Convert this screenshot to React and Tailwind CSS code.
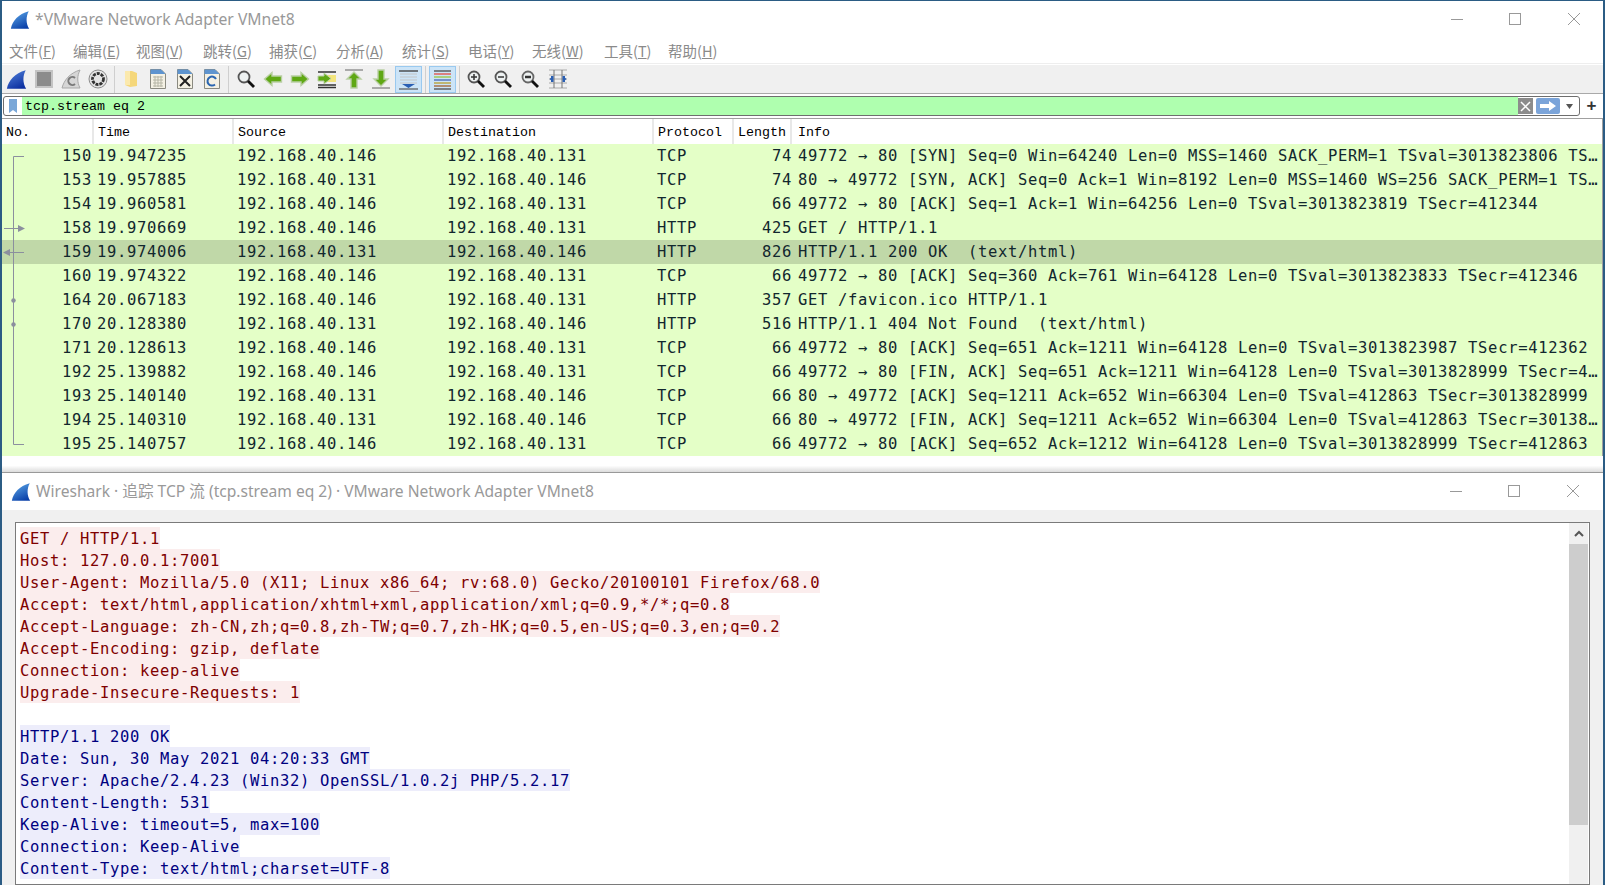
const rows = [
  ["150", "19.947235", "192.168.40.146", "192.168.40.131", "TCP", "74", "49772 → 80 [SYN] Seq=0 Win=64240 Len=0 MSS=1460 SACK_PERM=1 TSval=3013823806 TS…"],
  ["153", "19.957885", "192.168.40.131", "192.168.40.146", "TCP", "74", "80 → 49772 [SYN, ACK] Seq=0 Ack=1 Win=8192 Len=0 MSS=1460 WS=256 SACK_PERM=1 TS…"],
  ["154", "19.960581", "192.168.40.146", "192.168.40.131", "TCP", "66", "49772 → 80 [ACK] Seq=1 Ack=1 Win=64256 Len=0 TSval=3013823819 TSecr=412344"],
  ["158", "19.970669", "192.168.40.146", "192.168.40.131", "HTTP", "425", "GET / HTTP/1.1"],
  ["159", "19.974006", "192.168.40.131", "192.168.40.146", "HTTP", "826", "HTTP/1.1 200 OK  (text/html)"],
  ["160", "19.974322", "192.168.40.146", "192.168.40.131", "TCP", "66", "49772 → 80 [ACK] Seq=360 Ack=761 Win=64128 Len=0 TSval=3013823833 TSecr=412346"],
  ["164", "20.067183", "192.168.40.146", "192.168.40.131", "HTTP", "357", "GET /favicon.ico HTTP/1.1"],
  ["170", "20.128380", "192.168.40.131", "192.168.40.146", "HTTP", "516", "HTTP/1.1 404 Not Found  (text/html)"],
  ["171", "20.128613", "192.168.40.146", "192.168.40.131", "TCP", "66", "49772 → 80 [ACK] Seq=651 Ack=1211 Win=64128 Len=0 TSval=3013823987 TSecr=412362"],
  ["192", "25.139882", "192.168.40.146", "192.168.40.131", "TCP", "66", "49772 → 80 [FIN, ACK] Seq=651 Ack=1211 Win=64128 Len=0 TSval=3013828999 TSecr=4…"],
  ["193", "25.140140", "192.168.40.131", "192.168.40.146", "TCP", "66", "80 → 49772 [ACK] Seq=1211 Ack=652 Win=66304 Len=0 TSval=412863 TSecr=3013828999"],
  ["194", "25.140310", "192.168.40.131", "192.168.40.146", "TCP", "66", "80 → 49772 [FIN, ACK] Seq=1211 Ack=652 Win=66304 Len=0 TSval=412863 TSecr=30138…"],
  ["195", "25.140757", "192.168.40.146", "192.168.40.131", "TCP", "66", "49772 → 80 [ACK] Seq=652 Ack=1212 Win=64128 Len=0 TSval=3013828999 TSecr=412863"],
];

const request = [
  "GET / HTTP/1.1",
  "Host: 127.0.0.1:7001",
  "User-Agent: Mozilla/5.0 (X11; Linux x86_64; rv:68.0) Gecko/20100101 Firefox/68.0",
  "Accept: text/html,application/xhtml+xml,application/xml;q=0.9,*/*;q=0.8",
  "Accept-Language: zh-CN,zh;q=0.8,zh-TW;q=0.7,zh-HK;q=0.5,en-US;q=0.3,en;q=0.2",
  "Accept-Encoding: gzip, deflate",
  "Connection: keep-alive",
  "Upgrade-Insecure-Requests: 1",
];

const response = [
  "HTTP/1.1 200 OK",
  "Date: Sun, 30 May 2021 04:20:33 GMT",
  "Server: Apache/2.4.23 (Win32) OpenSSL/1.0.2j PHP/5.2.17",
  "Content-Length: 531",
  "Keep-Alive: timeout=5, max=100",
  "Connection: Keep-Alive",
  "Content-Type: text/html;charset=UTF-8",
];

const menus = [
  ["文件", "F", "w-[64px]"], ["编辑", "E", "w-[63px]"], ["视图", "V", "w-[67px]"], ["跳转", "G", "w-[66px]"],
  ["捕获", "C", "w-[67px]"], ["分析", "A", "w-[66px]"], ["统计", "S", "w-[66px]"], ["电话", "Y", "w-[64px]"],
  ["无线", "W", "w-[72px]"], ["工具", "T", "w-[64px]"], ["帮助", "H", "w-[60px]"],
];

const Fin = ({ className, id = "finGrad", from = "#5aa5e6", to = "#0a3fa8" }) => (
  <svg viewBox="0 0 24 24" className={className}>
    <defs>
      <linearGradient id={id} x1="0.2" y1="0" x2="0.7" y2="1">
        <stop offset="0" stopColor={from} />
        <stop offset="1" stopColor={to} />
      </linearGradient>
    </defs>
    <path d="M1 22.5C3 13 10 5 22.5 1.5C19 8 19 16 23 22.5Z" fill={`url(#${id})`} />
  </svg>
);

const WinControls = ({ dx }) => (
  <div className={`flex items-center ${dx}`}>
    <svg width="130" height="14" viewBox="0 0 130 14" stroke="#999" fill="none" shapeRendering="crispEdges">
      <path d="M1 6.5H13" />
      <rect x="59.5" y="0.5" width="11" height="11" />
      <path d="M118 0L130 12M130 0L118 12" shapeRendering="auto" />
    </svg>
  </div>
);

// toolbar drawings
const Doc = ({ children }) => (
  <svg width="22" height="22" viewBox="0 0 22 22">
    <path d="M3.5 1.5H14L18.5 6V20.5H3.5Z" fill="#f4f1e4" stroke="#8a8a80" />
    <path d="M3.5 1.5H14L18.5 6H3.5Z" fill="#5e94cf" />
    {children}
  </svg>
);
const Grid = () => (
  <path d="M6 9H16M6 12H16M6 15H16M6 18H16M8 8V19M11 8V19M14 8V19" stroke="#b5b5a5" strokeWidth="1" fill="none" />
);
const Lens = ({ sign, grey }) => (
  <svg width="20" height="20" viewBox="0 0 20 20" fill="none">
    <circle cx="8" cy="8" r="5.5" fill="#eef2f2" stroke={grey ? "#666" : "#555"} strokeWidth="1.8" />
    <path d="M12 12L18 18" stroke="#111" strokeWidth="2.8" />
    {sign === "plus" && <path d="M5 8H11M8 5V11" stroke="#333" strokeWidth="1.5" />}
    {(sign === "minus" || sign === "normal") && <path d="M5 8H11" stroke="#333" strokeWidth={sign === "normal" ? 2.5 : 1.5} />}
  </svg>
);
const GreenArrow = ({ left }) => (
  <svg width="20" height="20" viewBox="0 0 20 20" className={left ? "" : "-scale-x-100"}>
    <path d="M1.5 10L9 3.5V7H18.5V13H9V16.5Z" fill="#5fa814" stroke="#b9cfa4" strokeWidth="1.4" />
  </svg>
);
const Stack = ({ up }) => (
  <svg width="20" height="22" viewBox="0 0 20 22">
    <path d={up ? "M1 2H19" : "M1 20H19"} stroke="#aaa" strokeWidth="2" />
    <path d={up ? "M10 4L17 11H13V20H7V11H3Z" : "M10 18L17 11H13V2H7V11H3Z"} fill="#5fa814" stroke="#b9cfa4" strokeWidth="1.4" />
  </svg>
);

const Btn = ({ children }) => (
  <div className="w-[27px] h-[27px] flex items-center justify-center shrink-0">{children}</div>
);
const Sep = ({ w = "w-[6px]" }) => (
  <div className={`${w} h-[27px] flex justify-center shrink-0`}><div className="w-px h-full bg-[#cfcfcf]" /></div>
);
const Toggled = ({ children }) => (
  <div className="w-[27px] h-[27px] flex items-center justify-center shrink-0 bg-[#cce4f7] border border-[#99c9ef]">{children}</div>
);

const Toolbar = () => (
  <div className="h-[29px] bg-[#f0f0f0] border-b border-[#a9a9a9] flex items-center pl-px mt-px">
    <Btn><Fin className="w-[21px] h-[21px]" id="finTool" from="#4f7fd8" to="#0c2fa0" /></Btn>
    <Btn><svg width="18" height="18"><rect x="1" y="1" width="16" height="16" fill="#8c8c8c" stroke="#c4c4c4" strokeWidth="2" /></svg></Btn>
    <Btn>
      <svg width="20" height="20" viewBox="0 0 20 20">
        <path d="M1 19C3 11 9 4 19 1C16 7 16 13 19 19Z" fill="#d6d6d6" stroke="#a8a8a8" />
        <path d="M14 9A4 4 0 1 0 14 15" fill="none" stroke="#7a7a7a" strokeWidth="2" />
      </svg>
    </Btn>
    <Btn>
      <svg width="20" height="20" viewBox="0 0 20 20" fill="none">
        <circle cx="10" cy="10" r="9" fill="#e4e4e4" stroke="#8c8c8c" />
        <circle cx="10" cy="10" r="5.5" stroke="#333" strokeWidth="2.8" strokeDasharray="3 1" />
        <circle cx="10" cy="10" r="2.5" fill="#e4e4e4" />
      </svg>
    </Btn>
    <Sep />
    <Btn>
      <svg width="14" height="18" viewBox="0 0 14 18">
        <path d="M1 1H8L13 3V16L6 17L1 15Z" fill="#f5d77a" />
        <path d="M1 1H6V15H1Z" fill="#fbe9ad" />
      </svg>
    </Btn>
    <Btn><Doc><Grid /></Doc></Btn>
    <Btn><Doc><path d="M6 8L16 18M16 8L6 18" stroke="#222" strokeWidth="2" /></Doc></Btn>
    <Btn><Doc><path d="M15 11A4.5 4.5 0 1 0 14 16.5" fill="none" stroke="#2b66b1" strokeWidth="2" /></Doc></Btn>
    <Sep w="w-[7px]" />
    <Btn><Lens /></Btn>
    <Btn><GreenArrow left /></Btn>
    <Btn><GreenArrow /></Btn>
    <Btn>
      <svg width="20" height="20" viewBox="0 0 20 20">
        <path d="M1 3H19M1 16H19M1 18.5H19" stroke="#333" strokeWidth="1.3" />
        <rect x="8" y="6" width="11" height="7" fill="#f3e57d" />
        <path d="M14 9.5L7 4V7H1V12H7V15Z" fill="#5fa814" stroke="#b9cfa4" />
      </svg>
    </Btn>
    <Btn><Stack up /></Btn>
    <Btn><Stack /></Btn>
    <div className="w-px shrink-0" />
    <Toggled>
      <svg width="21" height="21" viewBox="0 0 21 21">
        <path d="M1 2H20" stroke="#444" strokeWidth="1.4" />
        <path d="M2 5H19M2 8H19M2 11H19M2 14H19" stroke="#c4c4c4" />
        <path d="M1 20H20" stroke="#555" strokeWidth="1.2" />
        <path d="M4 15H17L10.5 19Z" fill="#2a5fb3" />
      </svg>
    </Toggled>
    <Sep w="w-[7px]" />
    <Toggled>
      <svg width="21" height="21" viewBox="0 0 21 21" strokeWidth="1.4">
        <path d="M2 2H19" stroke="#555" />
        <path d="M2 5H19" stroke="#e2574c" />
        <path d="M2 8H19" stroke="#9ec74a" />
        <path d="M2 11H19" stroke="#4f6fb8" />
        <path d="M2 14H19" stroke="#b9a23a" />
        <path d="M2 17H19" stroke="#a5683a" />
        <path d="M2 20H19" stroke="#555" />
      </svg>
    </Toggled>
    <Sep />
    <Btn><Lens sign="plus" /></Btn>
    <Btn><Lens sign="minus" /></Btn>
    <Btn><Lens sign="normal" grey /></Btn>
    <div className="w-px shrink-0" />
    <Btn>
      <svg width="20" height="20" viewBox="0 0 20 20" fill="none">
        <path d="M1 1H19M1 19H19M1 6H19M1 10H19M1 14H19" stroke="#aaa" />
        <path d="M6 1V19M14 1V19" stroke="#777" />
        <path d="M5 7V13L1.5 10ZM15 7V13L18.5 10Z" fill="#2a5fb3" />
        <rect x="3" y="7" width="2.5" height="6" fill="#2a5fb3" />
        <rect x="14.5" y="7" width="2.5" height="6" fill="#2a5fb3" />
      </svg>
    </Btn>
  </div>
);

const FilterBar = () => (
  <div className="flex items-center h-[20px] mt-[2px] pl-px">
    <div className="flex-1 h-[20px] border border-[#6e6e6e] rounded-[3px] flex items-stretch overflow-hidden bg-white">
      <div className="w-[18px] flex items-center justify-center shrink-0">
        <svg width="8" height="14" viewBox="0 0 8 14"><path d="M0 0H8V14L4 11L0 14Z" fill="#7aa7d8" /></svg>
      </div>
      <div className="flex-1 bg-[#afffaf] pl-[3px] leading-[20px] text-[13.33px] text-black font-['Liberation_Mono',monospace] whitespace-pre">
        tcp.stream eq 2
      </div>
      <div className="w-[15px] bg-[#8c8c8c] my-px shrink-0 flex items-center justify-center">
        <svg width="11" height="11" viewBox="0 0 11 11"><path d="M1 1L10 10M10 1L1 10" stroke="#fff" strokeWidth="1.5" /></svg>
      </div>
      <div className="w-[24px] ml-[3px] bg-[#7ba4d9] my-px rounded-[2px] shrink-0 flex items-center justify-center">
        <svg width="16" height="10" viewBox="0 0 16 10"><path d="M0 3H9V0L16 5L9 10V7H0Z" fill="#fff" /></svg>
      </div>
      <div className="w-[19px] shrink-0 flex items-center justify-center">
        <svg width="7" height="5" viewBox="0 0 7 5"><path d="M0 0H7L3.5 5Z" fill="#555" /></svg>
      </div>
    </div>
    <div className="w-[23px] text-center text-[17px] leading-[18px] font-bold text-[#333] font-['Liberation_Sans',sans-serif]">+</div>
  </div>
);

const Head = ({ className, children }) => (
  <div className={`${className} pl-[4px] border-r-2 border-[#e8e8e8] h-full shrink-0`}>{children}</div>
);

const PacketList = () => (
  <div className="relative mt-[2px] border-t border-r border-[#a0a0a0] font-['DejaVu_Sans_Mono',monospace]">
    <div className="h-[25px] flex bg-white text-[13.33px] leading-[28px] text-black font-['Liberation_Mono',monospace]">
      <Head className="w-[92px]">No.</Head>
      <Head className="w-[140px]">Time</Head>
      <Head className="w-[210px]">Source</Head>
      <Head className="w-[210px]">Destination</Head>
      <Head className="w-[80px]">Protocol</Head>
      <Head className="w-[58px]">Length</Head>
      <div className="pl-[6px]">Info</div>
    </div>
    {rows.map((r) => (
      <div key={r[0]} className={`h-[24px] flex text-[15.5px] tracking-[0.67px] leading-[25px] text-[#12272e] whitespace-pre ${r[0] === "159" ? "bg-[#c0d8a8]" : "bg-[#e4ffc7]"}`}>
        <div className="w-[92px] shrink-0 text-right pr-[2px]">{r[0]}</div>
        <div className="w-[140px] shrink-0 pl-[3px]">{r[1]}</div>
        <div className="w-[210px] shrink-0 pl-[3px]">{r[2]}</div>
        <div className="w-[210px] shrink-0 pl-[3px]">{r[3]}</div>
        <div className="w-[80px] shrink-0 pl-[3px]">{r[4]}</div>
        <div className="w-[58px] shrink-0 text-right">{r[5]}</div>
        <div className="pl-[6px] overflow-hidden">{r[6]}</div>
      </div>
    ))}
    <svg className="absolute left-0 top-[25px]" width="30" height="312" viewBox="0 0 30 312" fill="none" stroke="#8b8f9e">
      <path d="M11.5 12.5H22M11.5 12.5V300.5H22" />
      <path d="M2 84.5H17M8 108.5H22" />
      <path d="M16 81V88L23 84.5Z M8 105V112L1 108.5Z" fill="#8b8f9e" stroke="none" />
      <circle cx="11.5" cy="156.5" r="2.2" fill="#8b8f9e" stroke="none" />
      <circle cx="11.5" cy="180.5" r="2.2" fill="#8b8f9e" stroke="none" />
    </svg>
  </div>
);

const StreamLine = ({ text, kind }) => (
  <div className={`block w-fit h-[22px] leading-[25px] ${kind === "req" ? "bg-[#fbeded] text-[#7f0000]" : "bg-[#ededfb] text-[#00007f]"}`}>{text}</div>
);

export default function App() {
  return (
    <div className="w-[1605px] h-[885px] overflow-hidden bg-[#2b5c84] px-[2px] pt-px flex flex-col font-['Noto_Sans','Noto_Sans_CJK_SC',sans-serif]">
      <div className="h-[471px] bg-white shrink-0 flex flex-col">
        <div className="h-[34px] flex items-center shrink-0 pt-[3px]">
          <Fin className="w-[20px] h-[20px] ml-[8px]" />
          <span className="ml-[5px] text-[15.7px] text-[#999]">*VMware Network Adapter VMnet8</span>
          <div className="flex-1" />
          <WinControls dx="mr-[23px]" />
        </div>
        <div className="h-[29px] flex items-center shrink-0 pl-[7px] pt-[3px] text-[14.5px] text-[#8a8a8a] border-b border-[#eeeeee] font-['Noto_Sans_CJK_SC','Noto_Sans',sans-serif]">
          {menus.map(([label, key, w]) => (
            <div key={key} className={w}>{label}(<span className="underline">{key}</span>)</div>
          ))}
        </div>
        <Toolbar />
        <FilterBar />
        <PacketList />
        <div className="flex-1 bg-gradient-to-b from-white via-white via-60% to-[#dcdcdc]" />
      </div>
      <div className="flex-1 bg-[#f0f0f0] border-t border-[#999] flex flex-col min-h-0">
        <div className="h-[37px] bg-white flex items-center shrink-0">
          <Fin className="w-[20px] h-[20px] ml-[9px]" id="finStream" />
          <span className="ml-[5px] text-[15.6px] text-[#999] leading-[35px]">Wireshark · 追踪 TCP 流 (tcp.stream eq 2) · VMware Network Adapter VMnet8</span>
          <div className="flex-1" />
          <WinControls dx="mr-[24px]" />
        </div>
        <div className="flex-1 min-h-0 mt-[12px] ml-[13px] mr-[13px] border border-[#7a7a7a] bg-white flex overflow-hidden">
          <div className="flex-1 pt-[4px] pl-[4px] text-[15.5px] tracking-[0.67px] whitespace-pre font-['DejaVu_Sans_Mono',monospace]">
            {request.map((t) => <StreamLine key={t} text={t} kind="req" />)}
            <div className="h-[22px]" />
            {response.map((t) => <StreamLine key={t} text={t} kind="res" />)}
          </div>
          <div className="w-[19px] mr-px bg-[#f0f0f0] flex flex-col shrink-0">
            <div className="h-[21px] flex items-center justify-center">
              <svg width="10" height="7" viewBox="0 0 10 7" fill="none"><path d="M1 6L5 2L9 6" stroke="#555" strokeWidth="2" /></svg>
            </div>
            <div className="h-[281px] bg-[#cdcdcd]" />
          </div>
        </div>
      </div>
    </div>
  );
}
